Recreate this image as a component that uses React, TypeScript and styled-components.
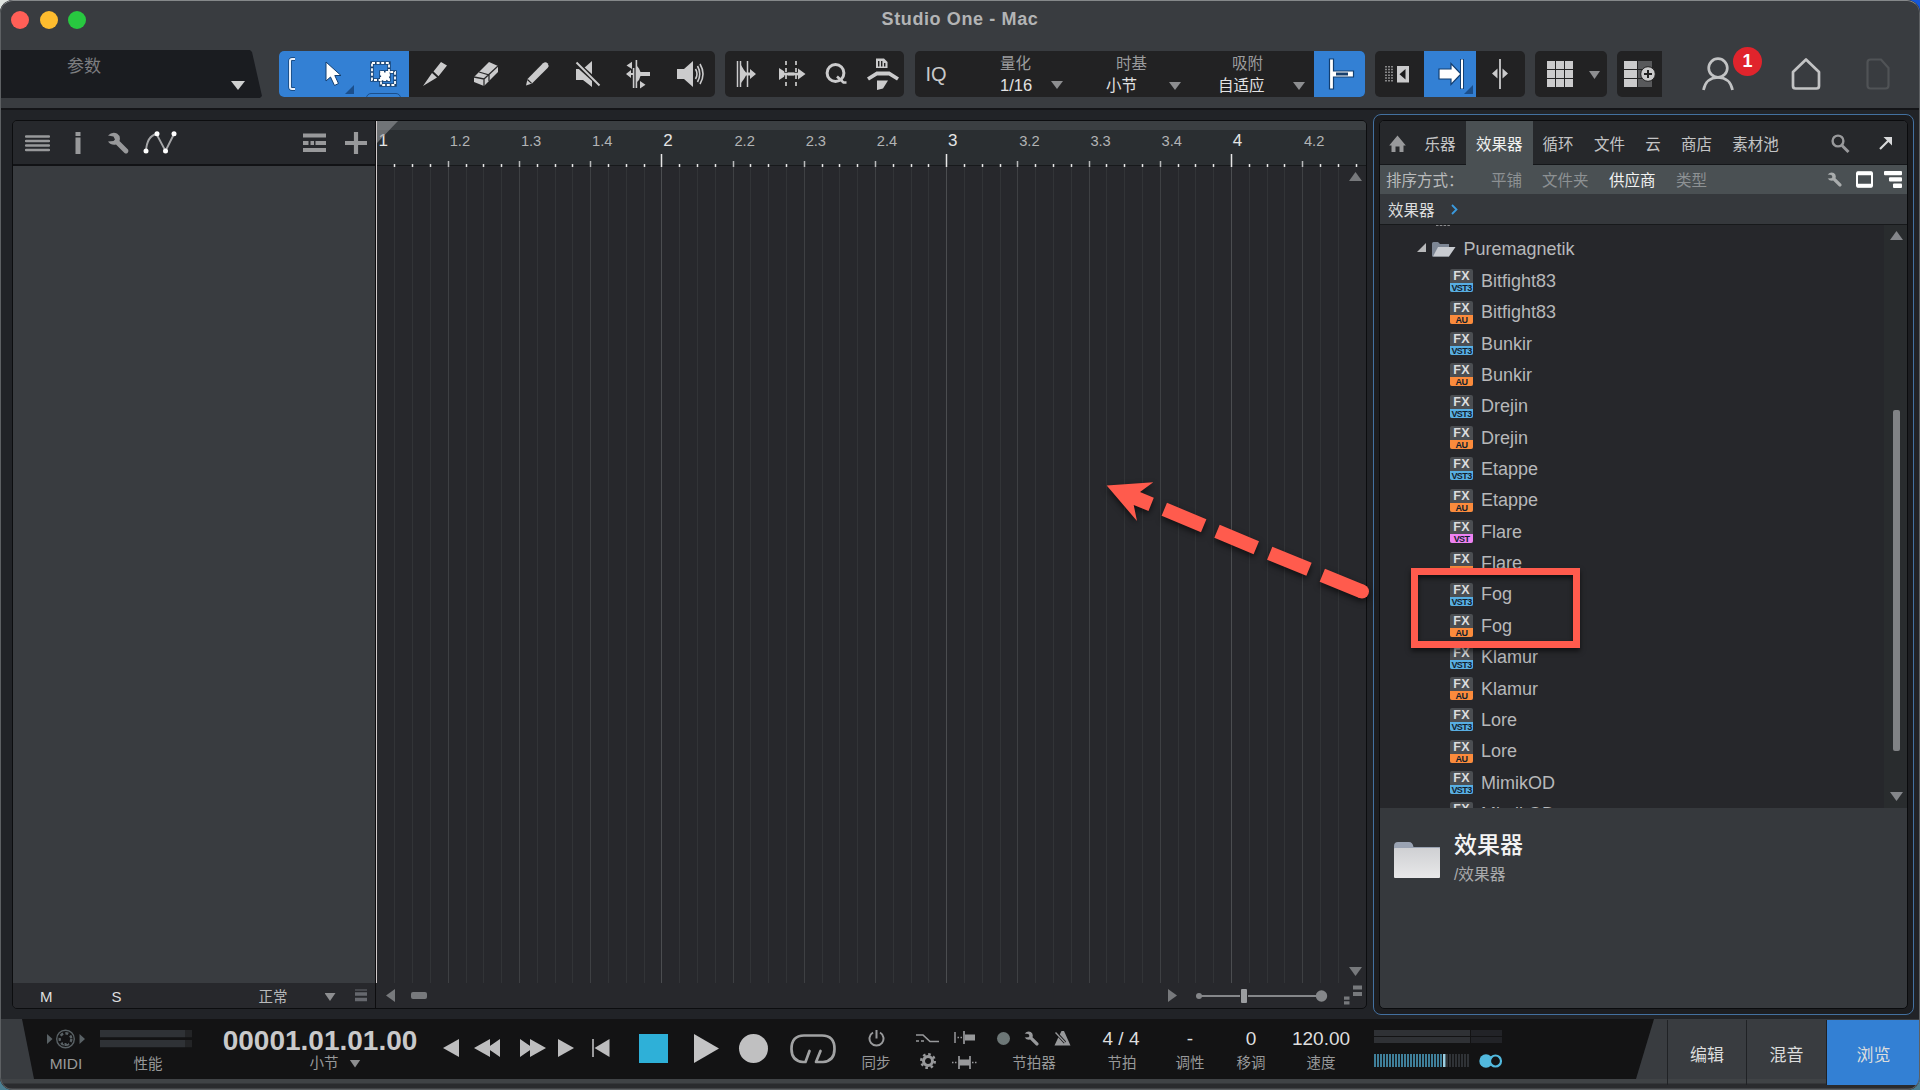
import React from 'react';
import styled, { createGlobalStyle } from 'styled-components';

const Global = createGlobalStyle`
  * { box-sizing: border-box; }
  html, body { margin: 0; padding: 0; }
  body {
    width: 1920px; height: 1090px; overflow: hidden;
    font-family: "Liberation Sans", "Noto Sans CJK SC", sans-serif;
    background:
      linear-gradient(#dfe4e0, #dfe4e0) 0 0 / 40px 40px no-repeat,
      linear-gradient(#1557d8, #1557d8) 100% 0 / 40px 40px no-repeat,
      #4b7f92;
  }
`;

const Window = styled.div`
  position: relative;
  display: flex;
  flex-direction: column;
  width: 1920px;
  height: 1090px;
  overflow: hidden;
  border-radius: 13px;
  background: #212327;
  color: #b9babb;
  &::after {
    content: '';
    position: absolute;
    inset: 0;
    border-radius: 13px;
    border: 1px solid #5d6063;
    border-top-color: #85888a;
    pointer-events: none;
  }
`;

const Header = styled.header`
  flex: none;
  height: 110px;
  background: #393c40;
  border-bottom: 2px solid #141518;
`;

const TitleBar = styled.div`
  display: grid;
  grid-template-columns: 200px 1fr 200px;
  height: 50px;
`;

const Lights = styled.div`
  display: flex;
  gap: 10.5px;
  padding: 11px 0 0 11px;
`;

const Light = styled.span<{ $color: string }>`
  width: 18px;
  height: 18px;
  border-radius: 50%;
  background: ${(p) => p.$color};
`;

const Title = styled.div`
  text-align: center;
  font-size: 18px;
  font-weight: 700;
  letter-spacing: 0.62px;
  line-height: 38px;
  color: #b3b4b5;
`;

const Tools = styled.div`
  display: flex;
  align-items: flex-start;
`;

const ParamPanel = styled.div`
  display: flex;
  width: 262px;
  height: 48px;
  padding: 6px 17px 0 67px;
  justify-content: space-between;
  background: #1a1c20;
  clip-path: polygon(0 0, 250px 0, 252px 2px, 262px 46px, 260px 48px, 0 48px);
  font-size: 17px;
  line-height: 22px;
  color: #7d7e80;
`;

const Triangle = styled.i<{ $w?: number; $h?: number; $dir?: 'up' | 'down' | 'left' | 'right'; $color?: string; $ml?: number; $mt?: number }>`
  flex: none;
  display: block;
  width: ${(p) => p.$w ?? 12}px;
  height: ${(p) => p.$h ?? 8}px;
  margin-left: ${(p) => p.$ml ?? 0}px;
  margin-top: ${(p) => p.$mt ?? 0}px;
  background: ${(p) => p.$color ?? '#8d8e90'};
  clip-path: ${(p) =>
    ({
      up: 'polygon(50% 0, 100% 100%, 0 100%)',
      down: 'polygon(0 0, 100% 0, 50% 100%)',
      left: 'polygon(100% 0, 100% 100%, 0 50%)',
      right: 'polygon(0 0, 100% 50%, 0 100%)',
    })[p.$dir ?? 'down']};
`;

const ToolGroup = styled.div<{ $w: number; $ml: number; $square?: boolean }>`
  display: flex;
  flex: none;
  width: ${(p) => p.$w}px;
  height: 46px;
  margin: 1px 0 0 ${(p) => p.$ml}px;
  overflow: hidden;
  border-radius: ${(p) => (p.$square ? '5px 0 0 5px' : '5px')};
  background: #222223;
`;

const Tool = styled.div<{ $w: number; $active?: boolean; $dx?: number }>`
  position: relative;
  display: flex;
  flex: none;
  align-items: center;
  justify-content: center;
  width: ${(p) => p.$w}px;
  height: 46px;
  padding-left: ${(p) => p.$dx ?? 0}px;
  background: ${(p) => (p.$active ? '#3380d4' : 'transparent')};
  color: #c9c9ca;
  font-size: 20px;
`;

const Corner = styled.i`
  position: absolute;
  right: 3px;
  bottom: 3px;
  width: 9px;
  height: 9px;
  background: #1b4f8c;
  clip-path: polygon(100% 0, 100% 100%, 0 100%);
`;

const TabHint = styled.i`
  position: absolute;
  left: 9px;
  bottom: -6px;
  width: 35px;
  height: 10px;
  border: 1px solid #1b4f8c;
  border-radius: 5px;
`;

const Field = styled.div<{ $w: number }>`
  display: flex;
  flex: none;
  justify-content: space-between;
  width: ${(p) => p.$w}px;
`;

const FieldLabel = styled.div<{ $l: number }>`
  padding-left: ${(p) => p.$l}px;
  padding-top: 2px;
  font-size: 15.5px;
  line-height: 22px;
  white-space: nowrap;
  color: #9b9c9e;
`;

const FieldValue = styled(FieldLabel)<{ $latin?: boolean }>`
  padding-top: 0;
  font-size: ${(p) => (p.$latin ? 16.5 : 15.5)}px;
  line-height: ${(p) => (p.$latin ? 20 : 21)}px;
  color: #e2e2e3;
`;

const Account = styled.div`
  display: flex;
  margin-left: 40px;
  padding-top: 7px;
`;

const AccountIcon = styled.div<{ $ml: number }>`
  position: relative;
  height: 34px;
  margin-left: ${(p) => p.$ml}px;
`;

const Badge = styled.span`
  position: absolute;
  left: 31px;
  top: -10px;
  width: 29px;
  height: 29px;
  border-radius: 50%;
  background: #e0242c;
  color: #fff;
  font-size: 18px;
  font-weight: 700;
  line-height: 29px;
  text-align: center;
`;

const Main = styled.main`
  display: flex;
  flex: none;
  height: 909px;
  padding: 10px 0 0 12px;
`;

const Arrange = styled.section`
  display: flex;
  flex: none;
  width: 1355px;
  height: 889px;
  border: 1px solid #0c0d0f;
  border-radius: 5px;
  overflow: hidden;
  background: #27282c;
`;

const TrackColumn = styled.div`
  display: flex;
  flex-direction: column;
  flex: none;
  width: 363px;
  border-right: 1px solid #0d0d0f;
`;

const TrackHeader = styled.div`
  display: flex;
  align-items: center;
  height: 45px;
  padding: 0 9px 0 12px;
  background: #26282c;
  border-bottom: 2px solid #111215;
`;

const Slot = styled.div<{ $ml?: number; $mt?: number }>`
  flex: none;
  display: flex;
  margin-left: ${(p) => p.$ml ?? 0}px;
  margin-top: ${(p) => p.$mt ?? 0}px;
`;

const TrackBody = styled.div`
  flex: 1;
  background: #393c40;
`;

const TrackFooter = styled.div`
  display: flex;
  height: 25px;
  align-items: flex-start;
  background: #27282c;
`;

const Text = styled.span<{ $ml?: number; $mt?: number; $size?: number; $color?: string; $w?: number }>`
  flex: none;
  width: ${(p) => (p.$w ? `${p.$w}px` : 'auto')};
  margin-left: ${(p) => p.$ml ?? 0}px;
  margin-top: ${(p) => p.$mt ?? 0}px;
  font-size: ${(p) => p.$size ?? 15}px;
  line-height: 24px;
  white-space: nowrap;
  color: ${(p) => p.$color ?? '#b9babb'};
`;

const Timeline = styled.div`
  position: relative;
  display: flex;
  flex-direction: column;
  flex: none;
  width: 990px;
`;

const RulerStrip = styled.div`
  height: 9px;
  background: #3b3f42;
`;

const RulerLabels = styled.div`
  display: flex;
  height: 24px;
  overflow: hidden;
  background: #2a2e31;
`;

const RulerLabel = styled.span<{ $bar: boolean }>`
  flex: none;
  width: 71.2px;
  padding-left: 2.5px;
  font-size: ${(p) => (p.$bar ? 17 : 14.7)}px;
  line-height: ${(p) => (p.$bar ? 22 : 23)}px;
  color: ${(p) => (p.$bar ? '#e4e5e5' : '#b2b4b5')};
`;

const Canvas = styled.div`
  display: flex;
  justify-content: space-between;
  flex: 1;
`;

const VScroll = styled.div`
  display: flex;
  flex-direction: column;
  justify-content: space-between;
  width: 17px;
  padding: 5px 4px 7px 0;
`;

const HScroll = styled.div`
  display: flex;
  height: 25px;
  align-items: flex-start;
`;

const Bar = styled.i<{ $w: number; $h: number; $color: string; $r?: number; $ml?: number; $mt?: number }>`
  display: block;
  flex: none;
  width: ${(p) => p.$w}px;
  height: ${(p) => p.$h}px;
  margin-left: ${(p) => p.$ml ?? 0}px;
  margin-top: ${(p) => p.$mt ?? 0}px;
  border-radius: ${(p) => p.$r ?? 0}px;
  background: ${(p) => p.$color};
`;

const PlayHead = styled.i`
  position: absolute;
  left: 0;
  top: 0;
  width: 1px;
  height: 862px;
  background: #cfc9ca;
`;

const StartMarker = styled.i`
  position: absolute;
  left: 1px;
  top: 0;
  width: 21px;
  height: 22px;
  background: rgba(150, 152, 155, 0.6);
  clip-path: polygon(0 0, 100% 0, 0 100%);
`;

const BrowserFrame = styled.section`
  flex: none;
  width: 541px;
  height: 901px;
  margin: -6px 0 0 6px;
  padding: 5px;
  border: 1px solid #43709f;
  border-radius: 8px;
  background: #1c1d20;
`;

const BrowserPanel = styled.div`
  display: flex;
  flex-direction: column;
  height: 100%;
  border: 1px solid #0a0b0d;
  border-radius: 5px;
  overflow: hidden;
  background: #36393d;
`;

const Tabs = styled.nav`
  display: flex;
  flex: none;
  height: 44px;
  background: #26282b;
  box-shadow: inset 0 -1px 0 #15171a;
`;

const Tab = styled.span<{ $w: number; $active?: boolean }>`
  display: flex;
  flex: none;
  justify-content: center;
  width: ${(p) => p.$w}px;
  height: 44px;
  font-size: 15.5px;
  line-height: 47px;
  background: ${(p) => (p.$active ? '#4a5053' : 'transparent')};
  color: ${(p) => (p.$active ? '#f0f0f0' : '#c3c4c5')};
`;

const SortRow = styled.div`
  display: flex;
  flex: none;
  height: 29px;
  padding-top: 3px;
  background: #4a5053;
`;

const PathRow = styled.div`
  display: flex;
  flex: none;
  height: 31px;
  padding-top: 4px;
  background: #35383c;
  border-bottom: 1px solid #17191b;
`;

const ListArea = styled.div`
  display: flex;
  flex: none;
  height: 583px;
  overflow: hidden;
  background: #26272b;
`;

const List = styled.div`
  display: flex;
  flex-direction: column;
  flex: 1;
  gap: 0;
`;

const ListTop = styled.div`
  flex: none;
  height: 8.8px;
  padding-left: 56px;
`;

const ListRow = styled.div<{ $l: number }>`
  display: flex;
  flex: none;
  align-items: center;
  height: 31.37px;
  padding-left: ${(p) => p.$l}px;
  font-size: 18px;
  color: #b7b8ba;
`;

const Name = styled.span<{ $ml: number }>`
  margin-left: ${(p) => p.$ml}px;
  line-height: 24px;
`;

const FxBadge = styled.span`
  display: flex;
  flex-direction: column;
  width: 23px;
  height: 23px;
  border-radius: 2px;
  overflow: hidden;
  background: #4b4e52;
  text-align: center;
  font-weight: 700;
`;

const FxTop = styled.span`
  height: 14px;
  font-size: 12.5px;
  line-height: 15px;
  letter-spacing: 0.3px;
  color: #dcddde;
`;

const FxFormat = styled.span<{ $kind: Kind }>`
  height: 9px;
  font-size: 9px;
  letter-spacing: -0.6px;
  line-height: 10px;
  color: #12202c;
  background: ${(p) => ({ VST3: '#58aee2', AU: '#fb8b3c', VST: '#ee82f2' })[p.$kind]};
`;

const ListScroll = styled.div`
  display: flex;
  flex-direction: column;
  align-items: center;
  width: 23px;
  padding: 6px 0 7px 2px;
  background: #292c2e;
`;

const Info = styled.div`
  display: flex;
  flex: 1;
  padding: 34px 0 0 14px;
`;

const InfoText = styled.div`
  margin: -13px 0 0 14px;
`;

const InfoName = styled.div`
  font-size: 23px;
  font-weight: 500;
  line-height: 33px;
  color: #f4f4f4;
`;

const InfoPath = styled.div`
  font-size: 15.7px;
  line-height: 25px;
  color: #a9aaac;
`;

const Footer = styled.footer`
  display: flex;
  flex: none;
  height: 71px;
  background: linear-gradient(#393c40 0 60px, #404346 60px 64px, #2a2b2e 65px 69px, #55585b 70px);
`;

const Transport = styled.div`
  display: flex;
  flex: none;
  width: 1632px;
  height: 60px;
  margin-left: 22px;
  background: #131314;
  clip-path: polygon(0 0, 1632px 0, 1614px 100%, 12px 100%);
`;

const Block = styled.div<{ $w: number; $ml?: number }>`
  display: flex;
  flex-direction: column;
  flex: none;
  width: ${(p) => p.$w}px;
  margin-left: ${(p) => p.$ml ?? 0}px;
  align-items: center;
`;

const Upper = styled.div`
  display: flex;
  align-items: center;
  justify-content: center;
  height: 31px;
  padding-top: 8px;
  font-size: 19px;
  white-space: nowrap;
  color: #dededf;
`;

const Caption = styled.div<{ $size?: number; $dx?: number }>`
  display: flex;
  align-items: center;
  gap: 11px;
  margin-top: 1px;
  padding-left: ${(p) => p.$dx ?? 0}px;
  font-size: ${(p) => p.$size ?? 14.5}px;
  line-height: 25px;
  white-space: nowrap;
  color: #98999a;
`;

const Clock = styled.div`
  margin-top: 6px;
  height: 25px;
  font-size: 28px;
  font-weight: 700;
  line-height: 31px;
  white-space: nowrap;
  color: #c9c9ca;
`;

const Meters = styled.div`
  display: grid;
  grid-template-columns: 96px 31px;
  column-gap: 1px;
  align-content: start;
  margin-left: 21px;
  padding-top: 11px;
`;

const MeterLine = styled.i<{ $dim?: boolean }>`
  height: 6px;
  margin-bottom: 1px;
  background: ${(p) => (p.$dim ? '#222327' : '#2f3135')};
`;

const Views = styled.div`
  display: flex;
  margin-left: 13px;
`;

const View = styled.div<{ $w: number; $active?: boolean }>`
  width: ${(p) => p.$w}px;
  height: 65px;
  margin-top: 1px;
  border-left: 1px solid #202225;
  text-align: center;
  font-size: 17px;
  line-height: 72px;
  color: #dcdddd;
  background: ${(p) => (p.$active ? '#3380d4' : 'transparent')};
`;

const Highlight = styled.div`
  position: absolute;
  left: 1411px;
  top: 568px;
  width: 169px;
  height: 80px;
  border: 7.5px solid #ff5b4d;
  box-shadow: 0 3px 5px rgba(0, 0, 0, 0.6), inset 0 3px 5px rgba(0, 0, 0, 0.6);
`;

const ArrowLayer = styled.svg`
  position: absolute;
  left: 1090px;
  top: 470px;
  filter: drop-shadow(0 3px 3px rgba(0, 0, 0, 0.6));
`;

type Kind = 'VST3' | 'AU' | 'VST';

interface SvgProps {
  w: number;
  h: number;
  children: React.ReactNode;
}

const Drawing = styled.svg`
  display: block;
  flex: none;
`;

const Svg = ({ w, h, children }: SvgProps) => (
  <Drawing width={w} height={h} viewBox={`0 0 ${w} ${h}`} fill="none">
    {children}
  </Drawing>
);

const C = '#cbcbcc';
const G = '#98999b';

const BracketIcon = () => (
  <Svg w={8} h={34}><path d="M7 2H4Q2 2 2 4V30Q2 32 4 32H7" stroke="#123e70" strokeWidth="3.4" /><path d="M7 2H4Q2 2 2 4V30Q2 32 4 32H7" stroke="#e8f0fa" strokeWidth="2" /></Svg>
);
const CursorIcon = () => (
  <Svg w={18} h={26}><path d="M2 1V20L6.5 16L10.5 24.5L14.5 22.5L10.8 14.5H17Z" fill="#fff" stroke="#123e70" strokeWidth="1" /></Svg>
);
const RangeIcon = () => (
  <Svg w={27} h={27}>
    <rect x="2" y="2" width="17" height="17" stroke="#173f6d" strokeWidth="3.4" />
    <rect x="11" y="11" width="14" height="13" stroke="#173f6d" strokeWidth="3.4" />
    <path d="M11 11L15 12.500L19 11L18 15L19 19L15 17.500L11 19L12 15Z" fill="#fff" stroke="#fff" strokeWidth="1.500" />
    <rect x="2" y="2" width="17" height="17" stroke="#fff" strokeWidth="1.8" strokeDasharray="3 1.6" />
    <rect x="11" y="11" width="14" height="13" stroke="#fff" strokeWidth="1.8" strokeDasharray="3 1.6" />
  </Svg>
);
const KnifeIcon = () => (
  <Svg w={26} h={26}><path d="M1 25L10 12L15 16.5ZM11.5 10.5L19 1L25 4.5L16.5 15.2Z" fill={C} /></Svg>
);
const EraserIcon = () => (
  <Svg w={26} h={26}>
    <path d="M1 16L16 1L25 5V11L11 25L1 21Z" fill={C} />
    <path d="M1 16L11 18L25 5M11 18V25M6 11L16 14V20" stroke="#2a2a2b" strokeWidth="1.3" />
  </Svg>
);
const PencilIcon = () => (
  <Svg w={26} h={26}><path d="M2 24.5L3.5 18L19 2.2Q21.5 .5 23.5 2.2Q25.5 4.5 23.8 6.8L8 22.5Z" fill={C} /><path d="M3.4 18.5L7.6 22.4" stroke="#222" strokeWidth="1.2" /></Svg>
);
const MuteIcon = () => (
  <Svg w={26} h={26}>
    <path d="M1 8H8L17 0V26L8 19H1Z" fill={C} />
    <path d="M0 1L25 24" stroke="#222" strokeWidth="5" /><path d="M1.5 1.5L24.5 24.5" stroke={C} strokeWidth="2" />
  </Svg>
);
const BendIcon = () => (
  <Svg w={26} h={30}>
    <path d="M11.4 1V29M8.600 9V29" stroke={C} strokeWidth="1.6" />
    <path d="M1 15L6 11V19ZM12 7L14 9.5L15.5 13H25V17H15.5L14 21L12 23ZM1.500 6.500L7 2.800V10ZM15 22V29.500L20.500 25.800ZM4 14H9V16H4Z" fill={C} />
  </Svg>
);
const SpeakerIcon = () => (
  <Svg w={28} h={28}>
    <path d="M1 9H8L17 1V27L8 19H1Z" fill={C} />
    <path d="M19.5 9Q22.5 14 19.5 19M21.5 6Q26 14 21.5 22M24 4Q30 14 24 24" stroke={C} strokeWidth="1.6" />
  </Svg>
);
const TransientIcon = () => (
  <Svg w={20} h={28}>
    <path d="M1.5 1V27M4.5 1V27M11.5 1V27" stroke={C} strokeWidth="1.5" />
    <path d="M5 5L8 10L10 12.5H14V9L20 14L14 19V15.5H10L8 19L5 23Z" fill={C} />
  </Svg>
);
const StretchIcon = () => (
  <Svg w={28} h={28}>
    <path d="M1 8L8 12.5H20V8.5L27.5 14L20 19.5V15.5H8L1 20Z" fill={C} />
    <path d="M8 1V27M18 1V27" stroke="#222" strokeWidth="3.5" /><path d="M8 1V27M18 1V27" stroke={C} strokeWidth="1.7" strokeDasharray="4 3" />
    <path d="M4 14H22" stroke={C} strokeWidth="2.5" />
  </Svg>
);
const QuantizeIcon = () => (
  <Svg w={22} h={22}><circle cx="10.5" cy="10" r="8.4" stroke={C} strokeWidth="3" /><path d="M12 13.5L18.5 19.5H21.5" stroke={C} strokeWidth="2.6" /></Svg>
);
const PanicIcon = () => (
  <Svg w={34} h={34}>
    <path d="M10 1.500H18L21.500 5V11H10Z" fill={C} /><path d="M12.700 4V9.500M15.700 4V9.500M18.700 6V9.500" stroke="#222" strokeWidth="1.400" />
    <path d="M2 22L11 16.500H23L32 22" stroke={C} strokeWidth="3.800" />
    <path d="M11 23.500H22L17 31.500L11 33Z" fill={C} />
  </Svg>
);
const SnapIcon = () => (
  <Svg w={28} h={32}>
    <path d="M1.5 1H5.5V13H25.5V19H5.5V31H1.5Z" fill="#fff" stroke="#123e70" strokeWidth="1.2" />
    <rect x="8" y="14.5" width="12" height="3" fill="#173f6d" />
  </Svg>
);
const FollowLeftIcon = () => (
  <Svg w={26} h={20}>
    <path d="M2 2V18M5 2V18M8 2V18" stroke="#bdbdbe" strokeWidth="1.3" strokeDasharray="1.5 1.3" />
    <rect x="13" y="2" width="12" height="16.5" fill={C} /><path d="M21.5 5V15.5L15.5 10.2Z" fill="#1b1b1c" />
  </Svg>
);
const AutoScrollIcon = () => (
  <Svg w={28} h={32}>
    <path d="M2 11H14V5.5L24 16L14 26.5V21H2Z" fill="#fff" stroke="#123e70" strokeWidth="1.2" />
    <path d="M25 1V31" stroke="#123e70" strokeWidth="4" /><path d="M25 1.5V30.5" stroke="#fff" strokeWidth="2" />
  </Svg>
);
const SplitIcon = () => (
  <Svg w={18} h={32}><path d="M9 1V31" stroke={C} strokeWidth="1.8" /><path d="M1 15.5L6.5 10.5V20.5ZM17 15.5L11.5 10.5V20.5Z" fill={C} /></Svg>
);
const GridIcon = () => (
  <Svg w={26} h={26}>
    {[0, 1, 2].map((r) => [0, 1, 2].map((c) => <rect key={`${r}${c}`} x={c * 9} y={r * 9} width="8" height="8" fill={C} />))}
  </Svg>
);
const ChannelAddIcon = () => (
  <Svg w={33} h={26}>
    {[0, 9, 18].map((y) => <React.Fragment key={y}><rect x="1" y={y} width="13" height="8" fill={C} /><rect x="15" y={y} width="14" height="8" fill="#58595b" /></React.Fragment>)}
    <circle cx="25" cy="13" r="7.3" fill={C} stroke="#222" /><path d="M25 9V17M21 13H29" stroke="#222" strokeWidth="2" />
  </Svg>
);
const UserIcon = () => (
  <Svg w={32} h={34}><circle cx="16" cy="11" r="9.3" stroke="#c2c3c4" strokeWidth="2.7" /><path d="M1.5 33Q4 20.5 16 20.5T30.5 33" stroke="#c2c3c4" strokeWidth="2.7" /></Svg>
);
const HouseIcon = () => (
  <Svg w={30} h={34}><path d="M2 15L15 2.5L28 15V29Q28 31.5 25.5 31.5H4.5Q2 31.5 2 29Z" stroke="#c2c3c4" strokeWidth="2.7" strokeLinejoin="round" /></Svg>
);
const PageIcon = () => (
  <Svg w={24} h={34}><path d="M4.5 2.5H15L22.5 11V28.5Q22.5 31.5 19.5 31.5H4.5Q1.5 31.5 1.5 28.5V5.5Q1.5 2.500 4.5 2.5Z" stroke="#505356" strokeWidth="2.2" /></Svg>
);
const ListIcon = () => (
  <Svg w={25} h={18}><path d="M1 2.500H24M1 7H24M1 11.500H24M1 16H24" stroke={G} strokeWidth="2.400" strokeLinecap="round" /></Svg>
);
const InfoIcon = () => (
  <Svg w={6} h={22}><rect x=".5" width="5" height="4" fill={G} /><rect x=".5" y="5.5" width="5" height="16.5" fill={G} /></Svg>
);
const WrenchIcon = ({ size, color = G }: { size: number; color?: string }) => (
  <Drawing width={size} height={size} viewBox="0 0 22 22">
    <path d="M1 3.5Q5-.5 10 1.5Q14 4 12.5 9L21 17.5Q22 19.5 20.5 21Q19 22 17.500 21L9 12.5Q4 13.5 1 9.5L6.5 9L8 7.5L6.5 4.5Z" fill={color} />
  </Drawing>
);
const CurveIcon = () => (
  <Svg w={34} h={23}>
    <path d="M3 20Q4 5 13.5 3L22.5 20L31 3" stroke="#a5a6a8" strokeWidth="1.9" />
    {[[3, 20], [14, 2.8], [22.5, 20], [31, 2.8]].map(([x, y]) => <circle key={x} cx={x} cy={y} r="2.5" fill="#fff" />)}
  </Svg>
);
const TrackRowsIcon = () => (
  <Svg w={23} h={20}><path d="M0 2.5H23M0 17H23" stroke={G} strokeWidth="3.8" /><path d="M0 10H5.5M7.5 10H11M12.5 10H23" stroke={G} strokeWidth="3.8" /></Svg>
);
const PlusIcon = () => (
  <Svg w={22} h={22}><path d="M11 0V22M0 11H22" stroke={G} strokeWidth="4.2" /></Svg>
);
const HomeSolid = () => (
  <Svg w={17} h={18}><path d="M8.5 .5L16.8 10.5H14.5V17H10.5V11.5H6.5V17H2.5V10.5H.2Z" fill={G} /></Svg>
);
const SearchIcon = () => (
  <Svg w={19} h={20}><circle cx="7" cy="7" r="5.4" stroke={G} strokeWidth="2.4" /><path d="M11 11.5L17.5 18" stroke={G} strokeWidth="3" /></Svg>
);
const PopOutIcon = () => (
  <Svg w={14} h={14}><path d="M1 13L9.5 4.5" stroke="#d9dadb" strokeWidth="2.2" /><path d="M4.5 1H13V9.5Z" fill="#d9dadb" /></Svg>
);
const PaneIcon = () => (
  <Svg w={17} h={17}><rect x="1" y="1.2" width="15" height="14.5" rx="1" stroke="#fff" strokeWidth="2" /><path d="M1 2.5H16M1 14.5H16" stroke="#fff" strokeWidth="3.5" /></Svg>
);
const TreeIcon = () => (
  <Svg w={18} h={17}><rect width="18" height="4.3" rx="1" fill="#fff" /><rect x="5" y="6.3" width="13" height="4.3" rx="1" fill="#fff" /><rect x="9" y="12.6" width="9" height="4.3" rx="1" fill="#fff" /></Svg>
);
const ChevronIcon = () => (
  <Svg w={7} h={11}><path d="M1 1L5.5 5.5L1 10" stroke="#3a9ade" strokeWidth="1.8" /></Svg>
);
const DisclosureIcon = () => (
  <Svg w={9} h={9}><path d="M9 0V9H0Z" fill="#b7b8ba" /></Svg>
);
const FolderOpenIcon = () => (
  <Svg w={24} h={15}><path d="M0 1.5Q0 0 1.5 0H6L8 2H17V14.5H0Z" fill="#7d8694" /><path d="M6 5H23.500L17 14.500H1Z" fill="#c8cbd0" /></Svg>
);
const FolderIcon = () => (
  <Svg w={46} h={36}>
    <defs><linearGradient id="folder" x1="0" y1="0" x2="0" y2="1"><stop offset="0" stopColor="#cfd0d3" /><stop offset="1" stopColor="#e8e8e9" /></linearGradient></defs>
    <path d="M0 8V4Q0 0 4 0H15Q18.5 0 19.5 5H46V10H0Z" fill="#9aa3b3" /><rect y="6" width="46" height="30" rx="1" fill="url(#folder)" />
  </Svg>
);
const MidiIcon = () => (
  <Svg w={40} h={22}>
    <path d="M1 6L6.5 11L1 16ZM33.5 6L39 11L33.5 16Z" fill="#596165" />
    <circle cx="19.5" cy="11" r="8.8" stroke="#596165" strokeWidth="1.4" />
    <circle cx="19.5" cy="11" r="5.8" stroke="#596165" strokeWidth="2.4" strokeDasharray="3 2.3" />
    <path d="M17 10.5H22V16H17Z" fill="#131314" /><path d="M18.5 15H20.5V18H18.5Z" fill="#596165" />
  </Svg>
);
const LoopIcon = () => (
  <Svg w={46} h={30}>
    <path d="M19.5 17L15.5 28H13Q1.5 27 1.5 15Q1.5 1.5 14 1.5H32Q44.5 1.5 44.5 15Q44.5 27 33 28H26L30.5 17" stroke="#a1a2a3" strokeWidth="2.7" strokeLinecap="round" strokeLinejoin="round" />
  </Svg>
);
const PowerIcon = () => (
  <Svg w={17} h={17}><path d="M5 2.5A7 7 0 1 0 12 2.5" stroke={G} strokeWidth="2" /><path d="M8.5 0V8.5" stroke={G} strokeWidth="2" /></Svg>
);
const PrecountIcon = () => (
  <Svg w={24} h={12}><path d="M0 3H7L14 9.5H23" stroke={G} strokeWidth="1.7" /><path d="M0 9H3M5 9H8" stroke={G} strokeWidth="1.7" /></Svg>
);
const GearIcon = () => (
  <Svg w={16} h={16}><circle cx="8" cy="8" r="4.500" stroke={G} strokeWidth="3" /><circle cx="8" cy="8" r="6.800" stroke={G} strokeWidth="2.400" strokeDasharray="2.600 2.740" /></Svg>
);
const PrerollIcon = () => (
  <Svg w={22} h={13}><path d="M1 1V12" stroke={G} strokeWidth="1.5" /><path d="M3.5 6.5H5M6.5 6.5H8" stroke={G} strokeWidth="1.5" /><path d="M10 0V13" stroke={G} strokeWidth="1.7" /><rect x="11" y="3.5" width="10" height="6" fill={G} /></Svg>
);
const AutoPunchIcon = () => (
  <Svg w={25} h={13}><path d="M0 6.5H1.5M3 6.5H4.5M20 6.5H21.5M23 6.5H24.5" stroke={G} strokeWidth="1.5" /><path d="M7 0V13M18 0V13" stroke={G} strokeWidth="1.7" /><rect x="7" y="3.5" width="11" height="6" fill={G} /></Svg>
);
const MetronomeIcon = () => (
  <Svg w={17} h={15}><path d="M7.500 0H10L16.500 14.500H.500L4.500 6Z" fill={G} /><path d="M1 .5L11 11.500" stroke="#131314" strokeWidth="3" /><path d="M1.500 1.500L11 11.500" stroke={G} strokeWidth="1.300" /></Svg>
);
const RewindIcon = ({ flip }: { flip?: boolean }) => (
  <Svg w={27} h={18}>
    <path d={flip ? 'M1 0L14 9L1 18ZM11 0L27 9L11 18Z' : 'M26 0L13 9L26 18ZM16 0L0 9L16 18Z'} fill="#bdbdbe" />
  </Svg>
);
const ToStartIcon = () => (
  <Svg w={18} h={18}><path d="M1 0V18" stroke="#bdbdbe" strokeWidth="1.6" /><path d="M17.5 0V18L2.5 9Z" fill="#bdbdbe" /></Svg>
);

const SUB = 17.8;
const ticks = Array.from({ length: 56 }, (_, i) => ({ x: Math.round(376.6 + i * SUB) - 376, i }));
const labels = [1, 2, 3, 4].flatMap((bar) => [1, 2, 3, 4].map((beat) => (beat === 1 ? `${bar}` : `${bar}.${beat}`))).slice(0, 14);

const plugins: [string, Kind][] = [
  ['Bitfight83', 'VST3'], ['Bitfight83', 'AU'], ['Bunkir', 'VST3'], ['Bunkir', 'AU'],
  ['Drejin', 'VST3'], ['Drejin', 'AU'], ['Etappe', 'VST3'], ['Etappe', 'AU'],
  ['Flare', 'VST'], ['Flare', 'AU'], ['Fog', 'VST3'], ['Fog', 'AU'],
  ['Klamur', 'VST3'], ['Klamur', 'AU'], ['Lore', 'VST3'], ['Lore', 'AU'],
  ['MimikOD', 'VST3'], ['MimikOD', 'AU'],
];

const Toolbar = () => (
  <Header>
    <TitleBar>
      <Lights>
        <Light $color="#ff5f57" />
        <Light $color="#febc2e" />
        <Light $color="#28c840" />
      </Lights>
      <Title>Studio One - Mac</Title>
    </TitleBar>
    <Tools>
      <ParamPanel>
        参数
        <Triangle $w={14} $h={9} $mt={25} $color="#cfd0d0" />
      </ParamPanel>
      <ToolGroup $w={436} $ml={17}>
        <Tool $w={26} $active><BracketIcon /></Tool>
        <Tool $w={52} $active $dx={4}><CursorIcon /><Corner /></Tool>
        <Tool $w={52} $active $dx={1}><RangeIcon /><TabHint /></Tool>
        <Tool $w={51}><KnifeIcon /></Tool>
        <Tool $w={51}><EraserIcon /></Tool>
        <Tool $w={51}><PencilIcon /></Tool>
        <Tool $w={51}><MuteIcon /></Tool>
        <Tool $w={50}><BendIcon /></Tool>
        <Tool $w={52} $dx={1}><SpeakerIcon /></Tool>
      </ToolGroup>
      <ToolGroup $w={179} $ml={10}>
        <Tool $w={41}><TransientIcon /></Tool>
        <Tool $w={51}><StretchIcon /></Tool>
        <Tool $w={38}><QuantizeIcon /></Tool>
        <Tool $w={49} $dx={7}><PanicIcon /></Tool>
      </ToolGroup>
      <ToolGroup $w={450} $ml={11}>
        <Tool $w={42}>IQ</Tool>
        <Field $w={106}>
          <div><FieldLabel $l={43}>量化</FieldLabel><FieldValue $l={43} $latin>1/16</FieldValue></div>
          <Triangle $mt={30} />
        </Field>
        <Field $w={118}>
          <div><FieldLabel $l={53}>时基</FieldLabel><FieldValue $l={43}>小节</FieldValue></div>
          <Triangle $mt={31} />
        </Field>
        <Field $w={124}>
          <div><FieldLabel $l={51}>吸附</FieldLabel><FieldValue $l={37}>自适应</FieldValue></div>
          <Triangle $mt={31} />
        </Field>
        <Slot $ml={9}><Tool $w={51} $active $dx={4}><SnapIcon /></Tool></Slot>
      </ToolGroup>
      <ToolGroup $w={150} $ml={10}>
        <Tool $w={44}><FollowLeftIcon /></Tool>
        <Slot $ml={5}><Tool $w={52} $active $dx={2}><AutoScrollIcon /><Corner /></Tool></Slot>
        <Tool $w={48}><SplitIcon /></Tool>
      </ToolGroup>
      <ToolGroup $w={72} $ml={10}>
        <Tool $w={50}><GridIcon /></Tool>
        <Triangle $w={11} $ml={4} $mt={20} />
      </ToolGroup>
      <ToolGroup $w={45} $ml={10} $square>
        <Tool $w={45}><ChannelAddIcon /></Tool>
      </ToolGroup>
      <Account>
        <AccountIcon $ml={0}><UserIcon /><Badge>1</Badge></AccountIcon>
        <AccountIcon $ml={57}><HouseIcon /></AccountIcon>
        <AccountIcon $ml={45}><PageIcon /></AccountIcon>
      </Account>
    </Tools>
  </Header>
);

const ArrangeView = () => (
  <Arrange>
    <TrackColumn>
      <TrackHeader>
        <ListIcon />
        <Slot $ml={25}><InfoIcon /></Slot>
        <Slot $ml={26}><WrenchIcon size={22} /></Slot>
        <Slot $ml={14}><CurveIcon /></Slot>
        <Slot $ml={126}><TrackRowsIcon /></Slot>
        <Slot $ml={19}><PlusIcon /></Slot>
      </TrackHeader>
      <TrackBody />
      <TrackFooter>
        <Text $ml={27} $mt={2} $color="#dededf">M</Text>
        <Text $ml={59} $mt={2} $color="#dededf">S</Text>
        <Text $ml={137} $mt={2} $size={14.5} $w={29}>正常</Text>
        <Triangle $ml={37} $mt={10} $w={11} />
        <Slot $ml={19} $mt={6}>
          <Svg w={12} h={13}><path d="M0 1H12" stroke="#66686e" strokeWidth="1" /><path d="M0 5H12M0 10.5H12" stroke="#66686e" strokeWidth="3.5" /></Svg>
        </Slot>
      </TrackFooter>
    </TrackColumn>
    <Timeline>
      <RulerStrip />
      <RulerLabels>
        {labels.map((l) => <RulerLabel key={l} $bar={l.length === 1}>{l}</RulerLabel>)}
      </RulerLabels>
      <Svg w={990} h={13}>
        <rect width="990" height="11" fill="#2a2e31" />
        <rect y="11" width="990" height="1" fill="#17191b" />
        {ticks.slice(1).map(({ x, i }) => {
          const h = i % 16 === 0 ? 13 : i % 4 === 0 ? 6 : 3;
          return <rect key={i} x={x - 0.25} y={13 - h} width="1.5" height={h} fill={i % 4 === 0 && i % 16 !== 0 ? '#b9babb' : '#e6e6e6'} />;
        })}
      </Svg>
      <Canvas>
        <Drawing width="970" height="816" shapeRendering="crispEdges">
          {ticks.slice(1, 55).map(({ x, i }) => (
            <rect key={i} x={x} width="1" height="816" fill={i % 16 === 0 ? '#4b4d50' : i % 4 === 0 ? '#3e4043' : '#323437'} />
          ))}
        </Drawing>
        <VScroll>
          <Triangle $w={13} $h={9} $dir="up" $color="#77797c" />
          <Triangle $w={13} $h={9} $color="#77797c" />
        </VScroll>
      </Canvas>
      <HScroll>
        <Triangle $ml={10} $mt={6} $w={9} $h={13} $dir="left" $color="#77797c" />
        <Bar $w={16} $h={7} $r={2} $ml={16} $mt={9} $color="#77797c" />
        <Triangle $ml={741} $mt={6} $w={9} $h={13} $dir="right" $color="#77797c" />
        <Slot $ml={18} $mt={5}>
          <Svg w={134} h={16}>
            <path d="M4 8H126" stroke="#85878a" strokeWidth="2.2" />
            <circle cx="4" cy="8" r="3" fill="#85878a" /><circle cx="126.5" cy="8" r="5.7" fill="#85878a" />
            <rect x="45" y="0" width="8" height="16" fill="#27282c" /><rect x="46" y="1" width="6" height="14" rx="1" fill="#9b9da0" />
          </Svg>
        </Slot>
        <Slot $ml={14} $mt={2}>
          <Svg w={20} h={20}><path d="M10 2.5H19M10 9H19M1 13.5H6.5M1 17.5H6.5" stroke="#77797c" strokeWidth="4" /><path d="M0 15.5H8" stroke="#27282c" strokeWidth="1.5" /></Svg>
        </Slot>
      </HScroll>
      <StartMarker />
      <PlayHead />
    </Timeline>
  </Arrange>
);

const Browser = () => (
  <BrowserFrame>
    <BrowserPanel>
      <Tabs>
        <Slot $ml={9} $mt={14}><HomeSolid /></Slot>
        <Slot $ml={8}><Tab $w={52}>乐器</Tab></Slot>
        <Tab $w={66.5} $active>效果器</Tab>
        <Tab $w={51}>循环</Tab>
        <Tab $w={52}>文件</Tab>
        <Tab $w={35}>云</Tab>
        <Tab $w={52}>商店</Tab>
        <Tab $w={66}>素材池</Tab>
        <Slot $ml={42} $mt={13}><SearchIcon /></Slot>
        <Slot $ml={29} $mt={15}><PopOutIcon /></Slot>
      </Tabs>
      <SortRow>
        <Text $ml={6} $mt={1} $size={15.5} $w={105}>排序方式：</Text>
        <Text $size={15.5} $mt={1} $w={51} $color="#8d9193">平铺</Text>
        <Text $size={15.5} $mt={1} $w={67} $color="#8d9193">文件夹</Text>
        <Text $size={15.5} $mt={1} $w={67} $color="#f2f2f2">供应商</Text>
        <Text $size={15.5} $mt={1} $w={32} $color="#8d9193">类型</Text>
        <Slot $ml={119} $mt={4}><WrenchIcon size={15} color="#a9acad" /></Slot>
        <Slot $ml={14} $mt={3}><PaneIcon /></Slot>
        <Slot $ml={11} $mt={3}><TreeIcon /></Slot>
      </SortRow>
      <PathRow>
        <Text $ml={8} $mt={1} $size={15.5} $w={47} $color="#dcddde">效果器</Text>
        <Slot $ml={16} $mt={6}><ChevronIcon /></Slot>
      </PathRow>
      <ListArea>
        <List>
          <ListTop>
            <Svg w={15} h={2}><path d="M0 .5H14" stroke="#8b8c8f" strokeWidth="1" strokeDasharray="2.500 1.300" /></Svg>
          </ListTop>
          <ListRow $l={37}>
            <Slot $mt={-3}><DisclosureIcon /></Slot>
            <Slot $ml={6}><FolderOpenIcon /></Slot>
            <Name $ml={7.5}>Puremagnetik</Name>
          </ListRow>
          {plugins.map(([name, kind], i) => (
            <ListRow key={i} $l={70}>
              <FxBadge><FxTop>FX</FxTop><FxFormat $kind={kind}>{kind}</FxFormat></FxBadge>
              <Name $ml={8}>{name}</Name>
            </ListRow>
          ))}
        </List>
        <ListScroll>
          <Triangle $w={13} $h={9} $dir="up" $color="#84868a" />
          <Bar $w={7} $h={341} $r={2} $mt={170} $color="#808285" />
          <Triangle $w={13} $h={9} $mt={41} $color="#84868a" />
        </ListScroll>
      </ListArea>
      <Info>
        <FolderIcon />
        <InfoText>
          <InfoName>效果器</InfoName>
          <InfoPath>/效果器</InfoPath>
        </InfoText>
      </Info>
    </BrowserPanel>
  </BrowserFrame>
);

const TransportBar = () => (
  <Footer>
    <Transport>
      <Block $w={44} $ml={22}>
        <Upper><MidiIcon /></Upper>
        <Caption $size={15.5}>MIDI</Caption>
      </Block>
      <Block $w={92} $ml={12}>
        <Slot $mt={11}>
          <Svg w={92} h={21}><path d="M0 3.7H85M0 13.7H85" stroke="#2f3236" strokeWidth="7.3" /><path d="M85 3.7H92M85 13.7H92" stroke="#232426" strokeWidth="7.3" /></Svg>
        </Slot>
        <Caption $dx={4}>性能</Caption>
      </Block>
      <Block $w={198} $ml={29}>
        <Clock>00001.01.01.00</Clock>
        <Caption><Slot $ml={30}>小节</Slot><Triangle $w={11} /></Caption>
      </Block>
      <Slot $ml={24} $mt={20}><Triangle $dir="left" $w={16} $h={18} $color="#bdbdbe" /></Slot>
      <Slot $ml={15} $mt={20}><RewindIcon /></Slot>
      <Slot $ml={18} $mt={20}><RewindIcon flip /></Slot>
      <Slot $ml={12} $mt={20}><Triangle $dir="right" $w={16} $h={18} $color="#bdbdbe" /></Slot>
      <Slot $ml={18} $mt={20}><ToStartIcon /></Slot>
      <Bar $ml={29} $mt={15} $w={29} $h={29} $color="#2eb0d8" />
      <Triangle $ml={26} $mt={15} $dir="right" $w={25} $h={29} $color="#c4c4c5" />
      <Bar $ml={20} $mt={15} $w={29} $h={29} $r={15} $color="#c0c0c1" />
      <Slot $ml={22} $mt={15}><LoopIcon /></Slot>
      <Block $w={30} $ml={25}>
        <Upper><PowerIcon /></Upper>
        <Caption>同步</Caption>
      </Block>
      <Block $w={24} $ml={25}>
        <Slot $mt={13}><PrecountIcon /></Slot>
        <Slot $mt={9}><GearIcon /></Slot>
      </Block>
      <Block $w={25} $ml={12}>
        <Slot $mt={12}><PrerollIcon /></Slot>
        <Slot $mt={12}><AutoPunchIcon /></Slot>
      </Block>
      <Block $w={74} $ml={20}>
        <Upper>
          <Bar $w={13} $h={13} $r={7} $color="#6d7777" />
          <Slot $ml={14}><WrenchIcon size={15} /></Slot>
          <Slot $ml={15}><MetronomeIcon /></Slot>
        </Upper>
        <Caption>节拍器</Caption>
      </Block>
      <Block $w={60} $ml={20}>
        <Upper>4 / 4</Upper>
        <Caption $dx={2}>节拍</Caption>
      </Block>
      <Block $w={40} $ml={19}>
        <Upper>-</Upper>
        <Caption>调性</Caption>
      </Block>
      <Block $w={40} $ml={21}>
        <Upper>0</Upper>
        <Caption>移调</Caption>
      </Block>
      <Block $w={64} $ml={18}>
        <Upper>120.00</Upper>
        <Caption>速度</Caption>
      </Block>
      <Meters>
        <MeterLine /><MeterLine $dim />
        <MeterLine /><MeterLine $dim />
        <Slot $mt={10}>
          <Svg w={96} h={13}>
            {Array.from({ length: 32 }, (_, i) => (
              <rect key={i} x={i * 3} width={i === 23 ? 2.5 : 2} height="13" fill={i < 23 ? '#3f7f9a' : i === 23 ? '#9ccfe2' : '#2f3236'} />
            ))}
          </Svg>
        </Slot>
        <Slot $ml={8} $mt={10}>
          <Svg w={24} h={14}><circle cx="7" cy="7" r="6.7" fill="#52b9de" /><circle cx="16.5" cy="7" r="5.5" fill="#131314" stroke="#52b9de" strokeWidth="2.2" /></Svg>
        </Slot>
      </Meters>
    </Transport>
    <Views>
      <View $w={79}>编辑</View>
      <View $w={80}>混音</View>
      <View $w={94} $active>浏览</View>
    </Views>
  </Footer>
);

export default function App() {
  return (
    <>
      <Global />
      <Window>
        <Toolbar />
        <Main>
          <ArrangeView />
          <Browser />
        </Main>
        <TransportBar />
        <Highlight />
        <ArrowLayer width="290" height="140" viewBox="1090 470 290 140">
          <path d="M1106.7 485.5L1153.3 482.3L1140 492L1153.8 497.7L1148.5 511L1133.7 505L1137 521Z" fill="#ff5b4d" />
          <path d="M1164.3 509.3L1203.7 525.7M1217 531.3L1256.3 547.7M1269.7 553.3L1309 569.3M1322.3 575.2L1362 591.5" stroke="#ff5b4d" strokeWidth="14" fill="none" />
          <circle cx="1362" cy="591.5" r="7" fill="#ff5b4d" />
        </ArrowLayer>
      </Window>
    </>
  );
}
